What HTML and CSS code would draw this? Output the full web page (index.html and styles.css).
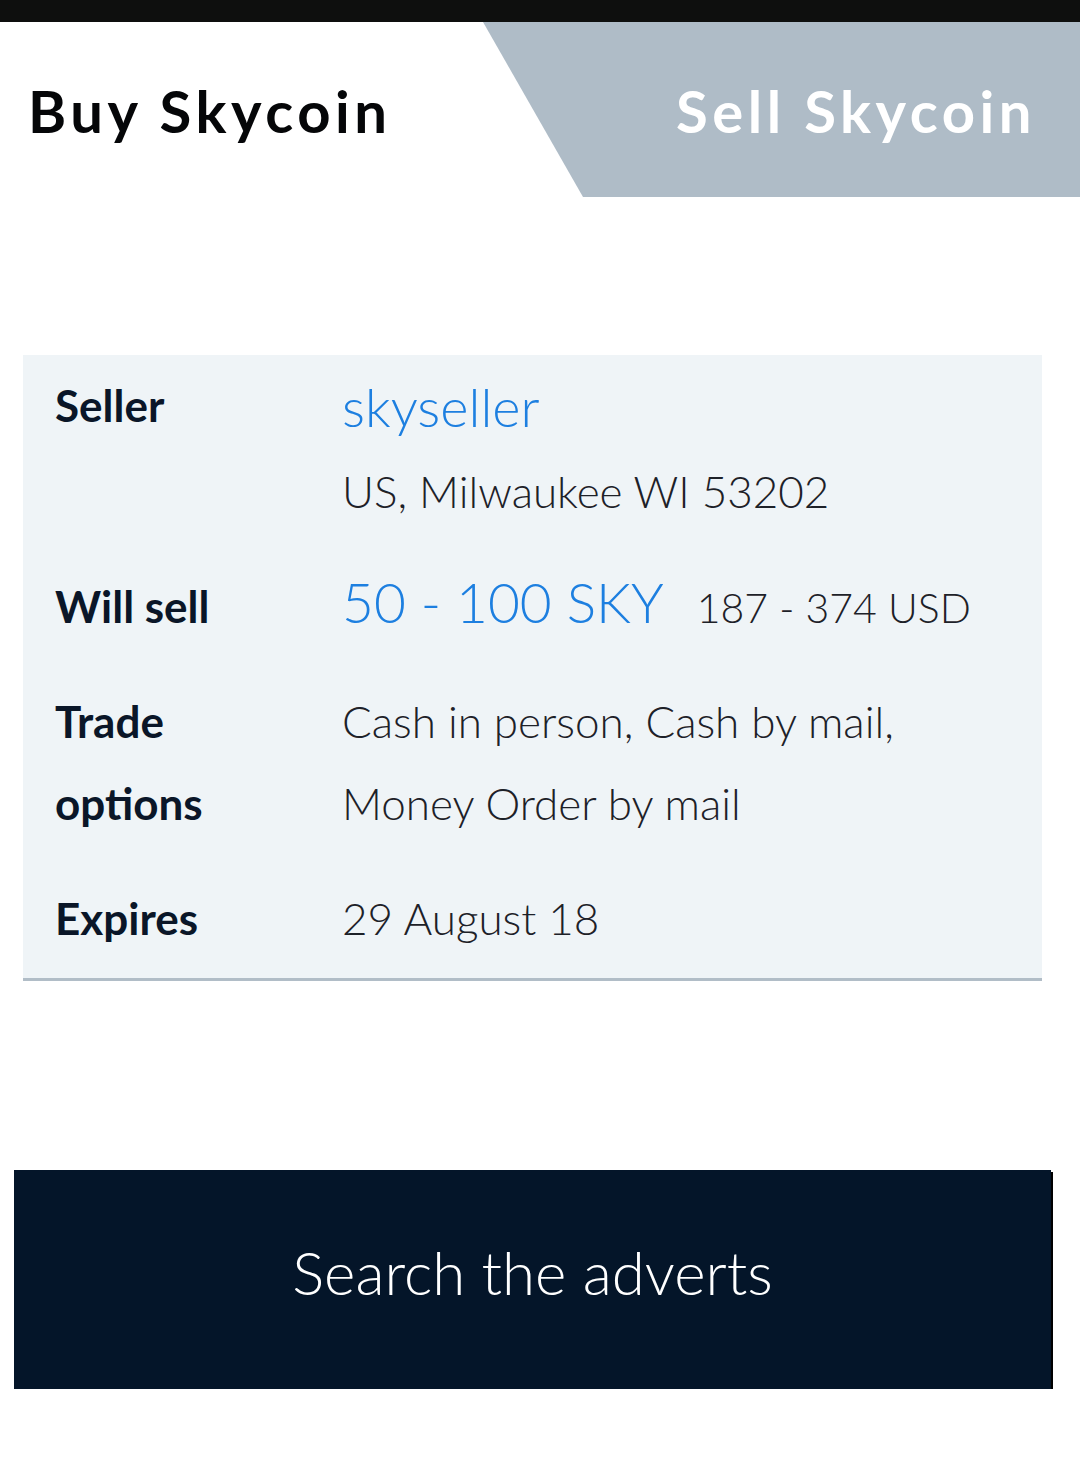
FILE: index.html
```html
<!DOCTYPE html>
<html>
  <head>
    <meta charset="utf-8">
    <title>Skycoin advert</title>
    <link rel="stylesheet" href="styles.css">
  </head>
  <body>
    <div class="status-bar"></div>
    <div class="tabs">
      <div class="tab tab-buy">Buy Skycoin</div>
      <div class="tab tab-sell">Sell Skycoin</div>
    </div>

    <div class="advert">
      <div class="label">Seller</div>
      <div class="value">
        <div class="seller-name">skyseller</div>
        <div>US, Milwaukee WI 53202</div>
      </div>

      <div class="label">Will sell</div>
      <div class="value"><span class="amount">50 - 100 SKY</span><span class="price">187 - 374 USD</span></div>

      <div class="label">Trade<br>options</div>
      <div class="value">Cash in person, Cash by mail,<br>Money Order by mail</div>

      <div class="label">Expires</div>
      <div class="value">29 August 18</div>
    </div>

    <a href="javascript:void(0)" class="search-btn">Search the adverts</a>
  </body>
</html>
```

FILE: styles.css
```css
*{margin: 0;padding: 0;box-sizing: border-box;}
body {background: #fff;font-family: Lato, "Noto Sans", sans-serif;color: #1b1f26;}

.status-bar {height: 22px;background: #0e0f0e;}

.tabs {display: flex;height: 175px;}
.tab {display: flex;align-items: center;font-size: 58px;font-weight: 700;letter-spacing: 4.5px;padding-top: 2px;}
.tab-buy {flex: 1;padding-left: 28px;color: #050608;}
.tab-sell {
  width: 597px;
  justify-content: flex-end;
  padding-right: 44px;
  color: #fff;
  background: #afbcc7;
  clip-path: polygon(0 0, 100% 0, 100% 100%, 100px 100%);
}

.advert {
  display: grid;
  grid-template-columns: 287px 1fr;
  row-gap: 33px;
  width: 1019px;
  margin: 158px 0 0 23px;
  padding: 9px 0 19px 32px;
  background: #eff4f7;
  border-bottom: 3px solid #b1bdc7;
  line-height: 82px;
}
.label {font-size: 44px;font-weight: 700;color: #0a1628;}
.value {font-size: 44px;font-weight: 300;color: #1d2128;}
.seller-name {font-size: 54px;color: #1d7fe0;line-height: 86px;}
.amount {font-size: 55px;line-height: 1;color: #1d7fe0;margin-right: 33px;}
.price {font-size: 41px;line-height: 1;}

.search-btn {
  display: flex;
  align-items: center;
  justify-content: center;
  width: 1037px;
  height: 219px;
  margin: 189px 0 0 14px;
  padding-bottom: 16px;
  background: #041529;
  box-shadow: 2px 2px 0 #000;
  color: #fff;
  font-size: 60px;
  font-weight: 300;
  text-decoration: none;
}
```
